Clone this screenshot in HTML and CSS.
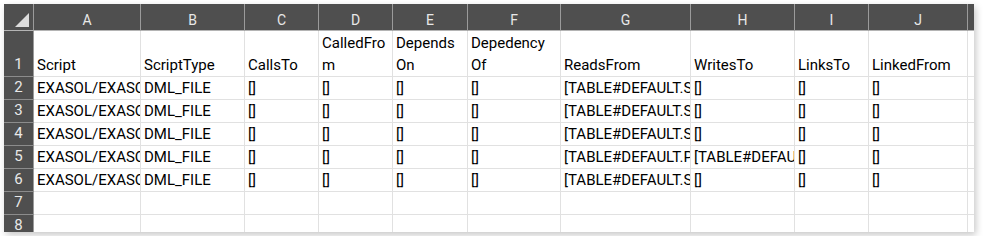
FILE: index.html
```html
<!DOCTYPE html>
<html lang="en">
<head>
  <meta charset="UTF-8" />
  <title>Sheet</title>
  <link rel="stylesheet" href="styles.css">
</head>
<body>
  <div class="sheet">
    <div class="hd corner"><span class="tri"></span></div>
    <div class="hd">A</div><div class="hd">B</div><div class="hd">C</div><div class="hd">D</div><div class="hd">E</div>
    <div class="hd">F</div><div class="hd">G</div><div class="hd">H</div><div class="hd">I</div><div class="hd">J</div><div class="hd"></div>

    <div class="rn">1</div>
    <div class="c wrap">Script</div><div class="c wrap">ScriptType</div><div class="c wrap">CallsTo</div>
    <div class="c wrap">CalledFrom</div><div class="c wrap">Depends On</div><div class="c wrap">Depedency Of</div>
    <div class="c wrap">ReadsFrom</div><div class="c wrap">WritesTo</div><div class="c wrap">LinksTo</div>
    <div class="c wrap">LinkedFrom</div><div class="c"></div>

    <div class="rn">2</div>
    <div class="c">EXASOL/EXASOL_DEMO.sql</div><div class="c">DML_FILE</div><div class="c">[]</div><div class="c">[]</div><div class="c">[]</div><div class="c">[]</div>
    <div class="c">[TABLE#DEFAULT.SALES]</div><div class="c">[]</div><div class="c">[]</div><div class="c">[]</div><div class="c"></div>

    <div class="rn">3</div>
    <div class="c">EXASOL/EXASOL_DEMO.sql</div><div class="c">DML_FILE</div><div class="c">[]</div><div class="c">[]</div><div class="c">[]</div><div class="c">[]</div>
    <div class="c">[TABLE#DEFAULT.SALES]</div><div class="c">[]</div><div class="c">[]</div><div class="c">[]</div><div class="c"></div>

    <div class="rn">4</div>
    <div class="c">EXASOL/EXASOL_DEMO.sql</div><div class="c">DML_FILE</div><div class="c">[]</div><div class="c">[]</div><div class="c">[]</div><div class="c">[]</div>
    <div class="c">[TABLE#DEFAULT.SALES]</div><div class="c">[]</div><div class="c">[]</div><div class="c">[]</div><div class="c"></div>

    <div class="rn">5</div>
    <div class="c">EXASOL/EXASOL_DEMO.sql</div><div class="c">DML_FILE</div><div class="c">[]</div><div class="c">[]</div><div class="c">[]</div><div class="c">[]</div>
    <div class="c">[TABLE#DEFAULT.PRODUCTS]</div><div class="c">[TABLE#DEFAULT.SALES]</div><div class="c">[]</div><div class="c">[]</div><div class="c"></div>

    <div class="rn">6</div>
    <div class="c">EXASOL/EXASOL_DEMO.sql</div><div class="c">DML_FILE</div><div class="c">[]</div><div class="c">[]</div><div class="c">[]</div><div class="c">[]</div>
    <div class="c">[TABLE#DEFAULT.SALES]</div><div class="c">[]</div><div class="c">[]</div><div class="c">[]</div><div class="c"></div>

    <div class="rn">7</div>
    <div class="c"></div><div class="c"></div><div class="c"></div><div class="c"></div><div class="c"></div><div class="c"></div>
    <div class="c"></div><div class="c"></div><div class="c"></div><div class="c"></div><div class="c"></div>

    <div class="rn">8</div>
    <div class="c"></div><div class="c"></div><div class="c"></div><div class="c"></div><div class="c"></div><div class="c"></div>
    <div class="c"></div><div class="c"></div><div class="c"></div><div class="c"></div><div class="c"></div>
  </div>
</body>
</html>
```

FILE: styles.css
```css
body {
  margin: 0;
  padding: 4px;
  background: #fff;
  font-family: Roboto, 'Liberation Sans', sans-serif;
  font-size: 15px;
  color: #000;
}
.sheet {
  display: grid;
  grid-template-columns: 30px 107px 104px 74px 74px 75px 93px 130px 104px 74px 99px 7px;
  grid-template-rows: 27px 46px repeat(7, 23px);
  width: 970px;
  height: 228px;
  overflow: hidden;
  background: #fff;
  box-shadow: 2px 3px 7px rgba(0, 0, 0, 0.22);
}
.hd {
  background: #4f4f4f;
  color: #e8e8e8;
  font-size: 14px;
  display: flex;
  align-items: center;
  justify-content: center;
  padding-top: 6px;
  box-sizing: border-box;
  border-right: 1px solid #9b9b9b;
  border-bottom: 1px solid #b4b4b4;
}
.corner {
  position: relative;
}
.tri {
  position: absolute;
  right: 4px;
  bottom: 3px;
  width: 0;
  height: 0;
  border-left: 14px solid transparent;
  border-bottom: 14px solid #dcdcdc;
}
.rn {
  background: #4f4f4f;
  color: #e8e8e8;
  display: flex;
  align-items: flex-end;
  justify-content: center;
  line-height: 23px;
  box-sizing: border-box;
  border-right: 1px solid #9b9b9b;
  border-bottom: 1px solid #8c8c8c;
}
.c {
  box-sizing: border-box;
  border-right: 1px solid #e1e1e1;
  border-bottom: 1px solid #e1e1e1;
  padding: 0 0 0 3px;
  line-height: 22px;
  white-space: nowrap;
  overflow: hidden;
  display: flex;
  align-items: flex-end;
}
.wrap {
  white-space: normal;
  overflow-wrap: anywhere;
}
```
